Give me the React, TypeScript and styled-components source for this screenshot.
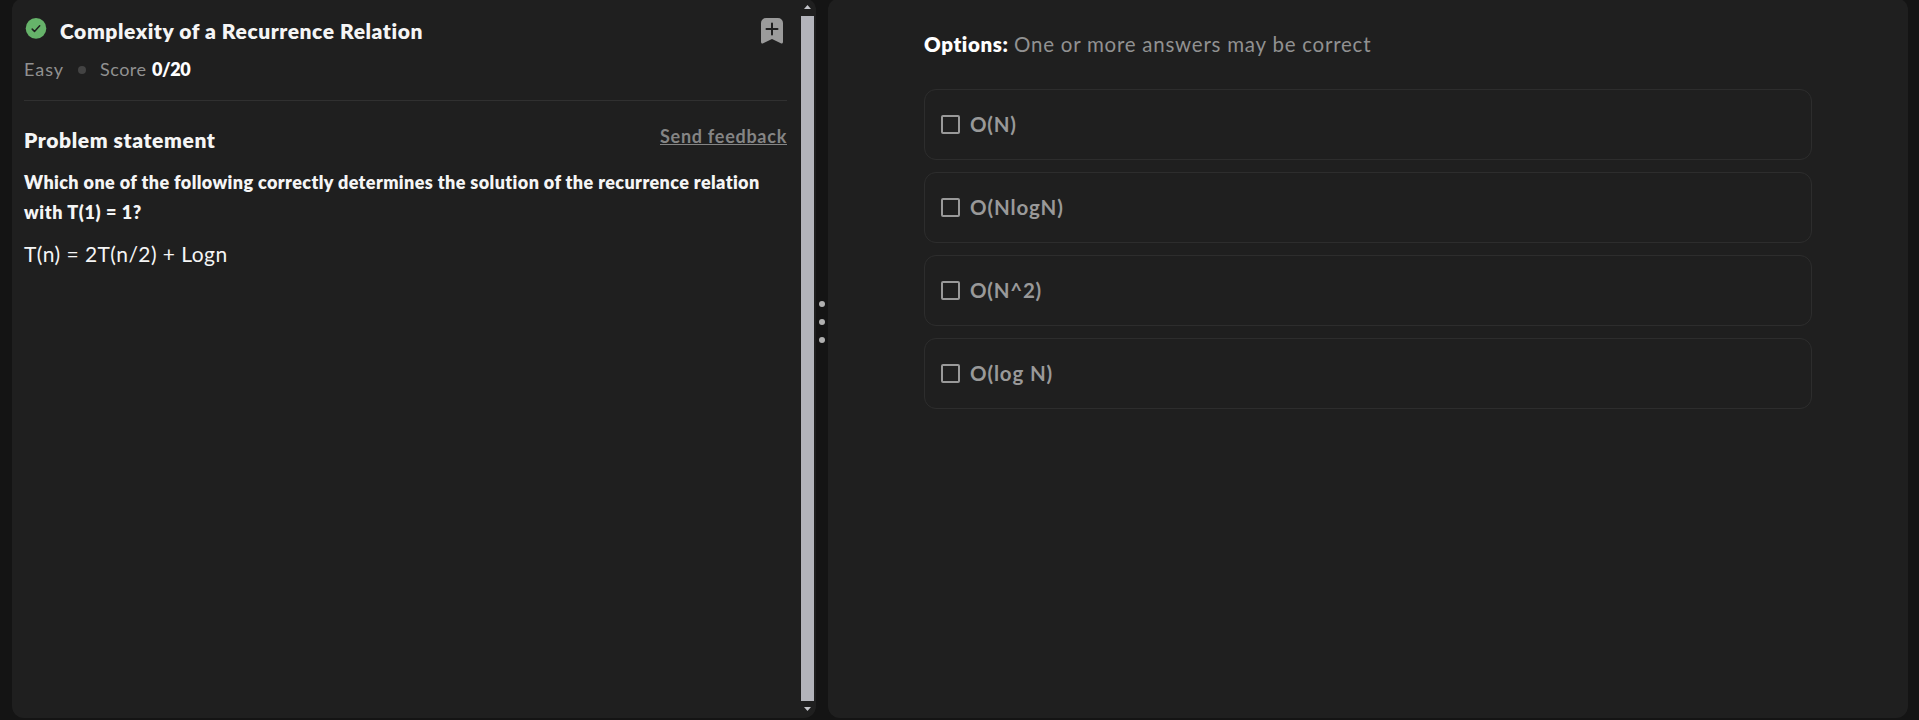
import React from "react";
import styled, { createGlobalStyle } from "styled-components";

const GlobalStyle = createGlobalStyle`
  * { box-sizing: border-box; }
  body {
    margin: 0;
    background: #141414;
    font-family: Lato, "Open Sans", sans-serif;
    overflow: hidden;
  }
`;

const Shell = styled.main`
  display: flex;
  width: 1919px;
  height: 720px;
  padding: 0 11px 2px 12px;
  overflow: hidden;
`;

const Panel = styled.section<{ $width: number }>`
  display: flex;
  flex: none;
  width: ${(p) => p.$width}px;
  height: 720px;
  margin-top: -2px;
  background: #1f1f1f;
  border-radius: 12px;
`;

const Problem = styled.div`
  flex: 1;
  padding: 19px 14px 0 12px;
`;

const Header = styled.header`
  display: flex;
  align-items: flex-start;
  height: 28px;
`;

const Title = styled.h1`
  flex: 1;
  margin: 0 0 0 12px;
  font-size: 21px;
  line-height: 28px;
  font-weight: 800;
  letter-spacing: 0.57px;
  color: #f5f5f5;
`;

const Meta = styled.div`
  display: flex;
  align-items: center;
  margin-top: 12px;
  height: 25px;
  font-size: 18px;
  line-height: 25px;
  color: #919191;
`;

const Difficulty = styled.span`
  width: 54px;
  letter-spacing: 1px;
`;

const Dot = styled.i`
  width: 8px;
  height: 8px;
  margin-right: 14px;
  border-radius: 50%;
  background: #434343;
`;

const ScoreLabel = styled.span`
  width: 52px;
  letter-spacing: 0.5px;
`;

const ScoreValue = styled.b`
  font-weight: 800;
  letter-spacing: -0.4px;
  color: #fff;
`;

const Separator = styled.hr`
  height: 1px;
  margin: 18px 0 23px;
  border: 0;
  background: #303030;
`;

const SectionRow = styled.div`
  display: flex;
  justify-content: space-between;
  align-items: flex-start;
  height: 30px;
`;

const SectionTitle = styled.h2`
  margin: 2px 0 0;
  font-size: 21px;
  line-height: 28px;
  font-weight: 800;
  letter-spacing: 0.6px;
  color: #f5f5f5;
`;

const FeedbackLink = styled.a`
  font-size: 18px;
  line-height: 24px;
  font-weight: 700;
  letter-spacing: 0.73px;
  color: #858585;
  text-decoration: underline;
  text-decoration-thickness: 1px;
  text-underline-offset: 1px;
  text-decoration-skip-ink: none;
`;

const Question = styled.p`
  margin: 13px 0 0;
  font-size: 18px;
  line-height: 30px;
  font-weight: 800;
  color: #f5f5f5;
`;

const Line = styled.span<{ $tracking: number }>`
  display: block;
  white-space: nowrap;
  letter-spacing: ${(p) => p.$tracking}px;
`;

const Formula = styled.p`
  margin: 12px 0 0;
  font-size: 21px;
  line-height: 30px;
  letter-spacing: 0.45px;
  color: #f5f5f5;
`;

const Scrollbar = styled.div`
  display: flex;
  flex-direction: column;
  align-items: center;
  width: 13px;
  margin-right: 2px;
  padding: 7px 0;
`;

const Thumb = styled.div`
  width: 13px;
  height: 685px;
  margin: 7px 0 6px;
  background: #b3b4bb;
`;

const Arrow = styled.svg`
  display: block;
  flex: none;
  width: 7px;
  height: 4px;
  fill: #c3c4c9;
`;

const Divider = styled.div`
  display: flex;
  flex-direction: column;
  align-items: center;
  flex: none;
  width: 12px;
  gap: 12px;
  padding-top: 301px;
`;

const Grip = styled.i`
  width: 6px;
  height: 6px;
  border-radius: 50%;
  background: #b0b0b0;
`;

const Answers = styled.div`
  flex: 1;
  padding: 32px 96px 0;
`;

const Hint = styled.div`
  height: 28px;
  margin-bottom: 31px;
  font-size: 20.5px;
  line-height: 28px;
  letter-spacing: 0.76px;
  color: #919191;
  white-space: nowrap;
`;

const HintLabel = styled.b`
  display: inline-block;
  width: 90px;
  font-weight: 800;
  letter-spacing: 0.6px;
  color: #fff;
`;

const OptionList = styled.div`
  display: grid;
  gap: 12px;
`;

const Option = styled.label<{ $tracking: number }>`
  display: flex;
  align-items: center;
  gap: 10px;
  height: 71px;
  padding: 0 16px;
  border: 1px solid #2d2d2d;
  border-radius: 12px;
  font-size: 20.5px;
  line-height: 29px;
  font-weight: 700;
  letter-spacing: ${(p) => p.$tracking}px;
  color: #999;
`;

const Checkbox = styled.span`
  width: 19px;
  height: 19px;
  border: 2px solid #999;
  border-radius: 2px;
`;

const options = [
  { label: "O(N)", tracking: 0.75 },
  { label: "O(NlogN)", tracking: 0.88 },
  { label: "O(N^2)", tracking: 0.75 },
  { label: "O(log N)", tracking: 0.86 },
];

function SolvedIcon() {
  return (
    <svg width="24" height="24" viewBox="0 0 24 24" fill="none">
      <circle cx="12" cy="11.4" r="10.3" fill="#66b36a" />
      <path d="M8.2 12.1l2.3 2.3 5.2-5.7" stroke="#1f1f1f" strokeWidth="1.5" strokeLinecap="round" strokeLinejoin="round" />
    </svg>
  );
}

function BookmarkIcon() {
  return (
    <svg width="30" height="30" viewBox="0 0 30 30" fill="none">
      <path
        d="M9 1h12a5 5 0 0 1 5 5v19c0 1.3-1.1 1.900-2.200 1.200L15 22l-8.800 4.200C5.100 26.900 4 26.300 4 25V6a5 5 0 0 1 5-5z"
        fill="#9b9b9b"
      />
      <path d="M15 6.500v11M9.500 12h11" stroke="#1f1f1f" strokeWidth="2" strokeLinecap="round" />
    </svg>
  );
}

export default function App() {
  return (
    <>
      <GlobalStyle />
      <Shell>
        <Panel $width={804}>
          <Problem>
            <Header>
              <SolvedIcon />
              <Title>Complexity of a Recurrence Relation</Title>
              <BookmarkIcon />
            </Header>
            <Meta>
              <Difficulty>Easy</Difficulty>
              <Dot />
              <ScoreLabel>Score</ScoreLabel>
              <ScoreValue>0/20</ScoreValue>
            </Meta>
            <Separator />
            <SectionRow>
              <SectionTitle>Problem statement</SectionTitle>
              <FeedbackLink>Send feedback</FeedbackLink>
            </SectionRow>
            <Question>
              <Line $tracking={0.387}>
                Which one of the following correctly determines the solution of the recurrence relation
              </Line>
              <Line $tracking={0.6}>with T(1) = 1?</Line>
            </Question>
            <Formula>T(n) = 2T(n/2) + Logn</Formula>
          </Problem>
          <Scrollbar>
            <Arrow viewBox="0 0 7 4"><path d="M3.500 0L7 4H0z" /></Arrow>
            <Thumb />
            <Arrow viewBox="0 0 7 4"><path d="M0 0h7L3.500 4z" /></Arrow>
          </Scrollbar>
        </Panel>
        <Divider>
          <Grip />
          <Grip />
          <Grip />
        </Divider>
        <Panel $width={1080}>
          <Answers>
            <Hint>
              <HintLabel>Options:</HintLabel>
              One or more answers may be correct
            </Hint>
            <OptionList>
              {options.map((o) => (
                <Option key={o.label} $tracking={o.tracking}>
                  <Checkbox />
                  {o.label}
                </Option>
              ))}
            </OptionList>
          </Answers>
        </Panel>
      </Shell>
    </>
  );
}
